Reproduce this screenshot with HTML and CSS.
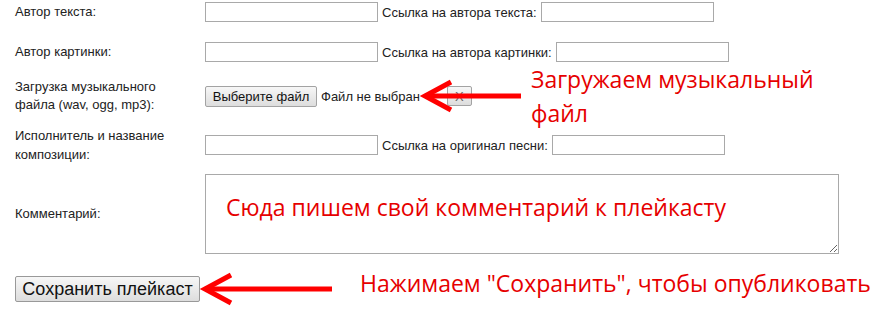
FILE: index.html
```
<!DOCTYPE html>
<html lang="ru">
<head>
<meta charset="utf-8">
<title>Плейкаст</title>
<link rel="stylesheet" href="styles.css">
</head>
<body>
<div class="page">
  <div class="form">
    <div class="row r1">
      <div class="label">Автор текста:</div>
      <div class="field">
        <input class="text" type="text">
        <span class="sub">Ссылка на автора текста:</span>
        <input class="text" type="text">
      </div>
    </div>
    <div class="row r2">
      <div class="label">Автор картинки:</div>
      <div class="field">
        <input class="text" type="text">
        <span class="sub">Ссылка на автора картинки:</span>
        <input class="text" type="text">
      </div>
    </div>
    <div class="row r3">
      <div class="label">Загрузка музыкального<br>файла (wav, ogg, mp3):</div>
      <div class="field">
        <button class="btn file-btn" type="button">Выберите файл</button>
        <span class="sub">Файл не выбран</span>
        <button class="btn clear-btn" type="button">X</button>
      </div>
    </div>
    <div class="row r4">
      <div class="label">Исполнитель и название<br>композиции:</div>
      <div class="field">
        <input class="text" type="text">
        <span class="sub">Ссылка на оригинал песни:</span>
        <input class="text" type="text">
      </div>
    </div>
    <div class="row r5">
      <div class="label">Комментарий:</div>
      <div class="field">
        <textarea class="comment"></textarea>
      </div>
    </div>
    <div class="row r6">
      <button class="btn save-btn" type="button">Сохранить плейкаст</button>
    </div>
  </div>

  <svg class="arrows" width="888" height="324" viewBox="0 0 888 324">
    <g fill="none" stroke="#f00" stroke-width="5" stroke-linejoin="miter">
      <line x1="426" y1="96" x2="521" y2="96"/>
      <polyline points="451,82 425,96 451,110"/>
      <line x1="207" y1="289" x2="332" y2="289"/>
      <polyline points="231,275 205,289 231,303"/>
    </g>
  </svg>
  <div class="note note-file">Загружаем музыкальный<br>файл</div>
  <div class="note note-comment">Сюда пишем свой комментарий к плейкасту</div>
  <div class="note note-save">Нажимаем "Сохранить", чтобы опубликовать</div>
</div>
</body>
</html>
```
FILE: styles.css
```
html, body {
  margin: 0;
  padding: 0;
  background: #fff;
}

body {
  font-family: "Liberation Sans", Arial, sans-serif;
  font-size: 13px;
  color: #222;
}

.page {
  position: relative;
  width: 888px;
  height: 324px;
  overflow: hidden;
}

.form {
  display: flex;
  flex-direction: column;
  padding-left: 15px;
}

.row {
  display: flex;
  align-items: center;
}

.label {
  width: 190px;
  line-height: 18px;
}

.field {
  display: flex;
  align-items: center;
  gap: 4px;
}

.r1 { height: 24px; }
.r2 { height: 24px; margin-top: 16px; }
.r3 { height: 36px; margin-top: 14px; }
.r4 { height: 38px; margin-top: 12px; }
.r4 .label { line-height: 19px; }
.r5 { height: 80px; margin-top: 10px; }
.r6 { margin-top: 22px; }

.text {
  box-sizing: border-box;
  width: 173px;
  height: 20px;
  margin: 0;
  padding: 0 2px;
  border: 1px solid #a9a9a9;
  background: #fff;
  font: inherit;
}

.sub {
  white-space: nowrap;
}

.btn {
  box-sizing: border-box;
  margin: 0;
  border: 1px solid #a3a3a3;
  border-radius: 2px;
  background: linear-gradient(#f7f7f7, #dddddd);
  font-family: "Liberation Sans", Arial, sans-serif;
  color: #111;
  white-space: nowrap;
}

.file-btn {
  width: 112px;
  height: 21px;
  padding: 0;
  font-size: 13px;
}

.clear-btn {
  width: 25px;
  height: 20px;
  margin-left: 23px;
  padding: 0;
  font-size: 13px;
  color: #666;
}

.save-btn {
  width: 185px;
  height: 26px;
  padding: 0;
  font-size: 18px;
  border-color: #999;
}

.comment {
  box-sizing: border-box;
  width: 634px;
  height: 80px;
  margin: 0;
  border: 1px solid #a9a9a9;
  background: #fff;
  resize: both;
}

.arrows {
  position: absolute;
  left: 0;
  top: 0;
  pointer-events: none;
}

.note {
  position: absolute;
  font-family: "Open Sans", "Noto Sans", sans-serif;
  font-size: 23px;
  line-height: 34px;
  color: #e60000;
  white-space: nowrap;
}

.note-file {
  left: 531px;
  top: 62px;
}

.note-comment {
  left: 226px;
  top: 190px;
}

.note-save {
  left: 360px;
  top: 266px;
}
```
